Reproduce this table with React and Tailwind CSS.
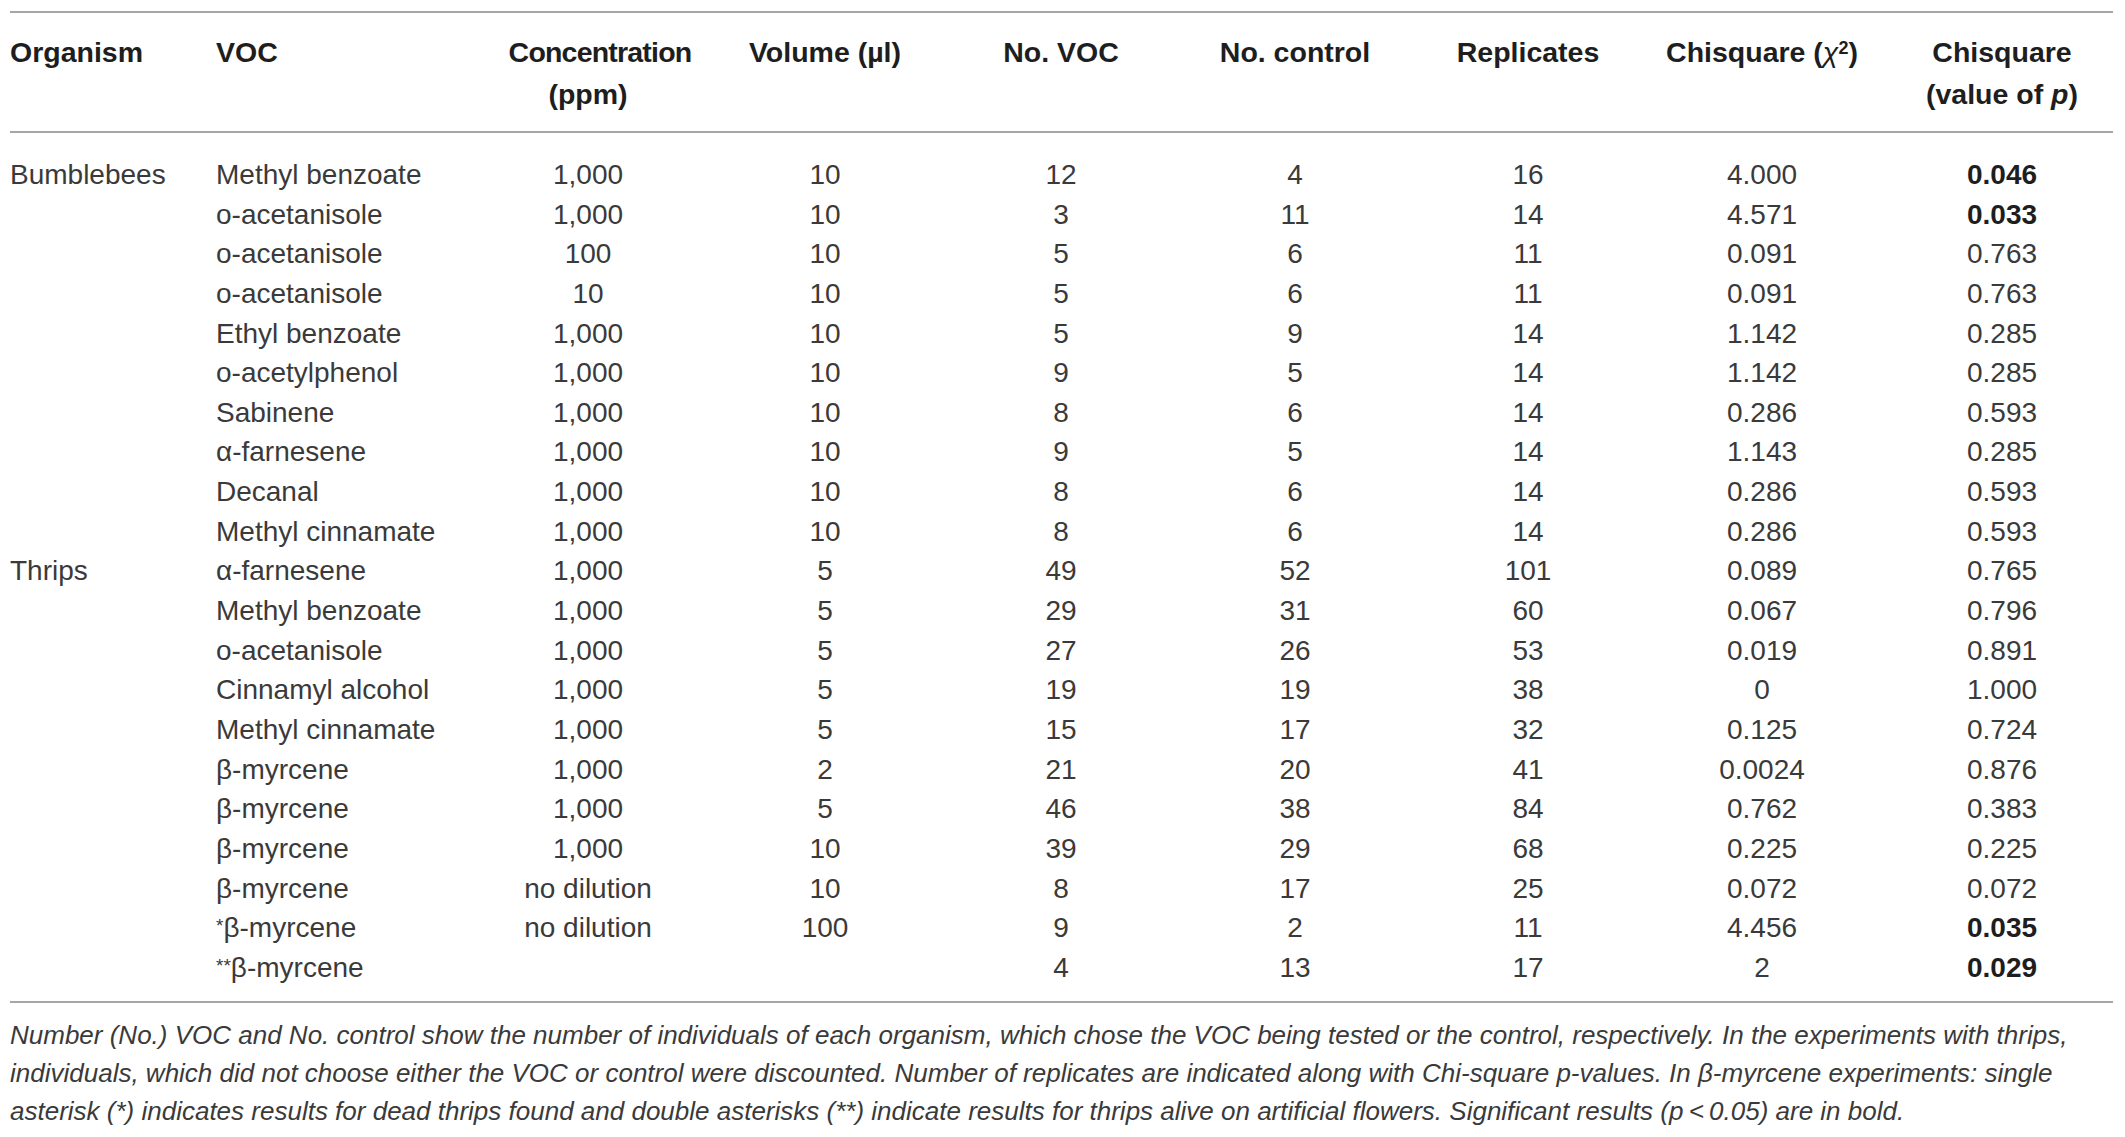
import React from "react";

const rows = [
  ["Bumblebees", "Methyl benzoate", "1,000", "10", "12", "4", "16", "4.000", "0.046", true],
  ["", "o-acetanisole", "1,000", "10", "3", "11", "14", "4.571", "0.033", true],
  ["", "o-acetanisole", "100", "10", "5", "6", "11", "0.091", "0.763"],
  ["", "o-acetanisole", "10", "10", "5", "6", "11", "0.091", "0.763"],
  ["", "Ethyl benzoate", "1,000", "10", "5", "9", "14", "1.142", "0.285"],
  ["", "o-acetylphenol", "1,000", "10", "9", "5", "14", "1.142", "0.285"],
  ["", "Sabinene", "1,000", "10", "8", "6", "14", "0.286", "0.593"],
  ["", "α-farnesene", "1,000", "10", "9", "5", "14", "1.143", "0.285"],
  ["", "Decanal", "1,000", "10", "8", "6", "14", "0.286", "0.593"],
  ["", "Methyl cinnamate", "1,000", "10", "8", "6", "14", "0.286", "0.593"],
  ["Thrips", "α-farnesene", "1,000", "5", "49", "52", "101", "0.089", "0.765"],
  ["", "Methyl benzoate", "1,000", "5", "29", "31", "60", "0.067", "0.796"],
  ["", "o-acetanisole", "1,000", "5", "27", "26", "53", "0.019", "0.891"],
  ["", "Cinnamyl alcohol", "1,000", "5", "19", "19", "38", "0", "1.000"],
  ["", "Methyl cinnamate", "1,000", "5", "15", "17", "32", "0.125", "0.724"],
  ["", "β-myrcene", "1,000", "2", "21", "20", "41", "0.0024", "0.876"],
  ["", "β-myrcene", "1,000", "5", "46", "38", "84", "0.762", "0.383"],
  ["", "β-myrcene", "1,000", "10", "39", "29", "68", "0.225", "0.225"],
  ["", "β-myrcene", "no dilution", "10", "8", "17", "25", "0.072", "0.072"],
  ["", "*β-myrcene", "no dilution", "100", "9", "2", "11", "4.456", "0.035", true],
  ["", "**β-myrcene", "", "", "4", "13", "17", "2", "0.029", true],
];

// column widths tuned so the centred columns line up with the original table
const cols = "grid grid-cols-[206px_254px_236px_238px_234px_234px_232px_236px_233px]";

function Voc({ name }) {
  const m = name.match(/^(\**)(.*)$/);
  return (
    <span>
      {m[1] && <span className="text-[19px] leading-none align-[5px]">{m[1]}</span>}
      {m[2]}
    </span>
  );
}

export default function App() {
  return (
    <div
      className="min-h-[1137px] w-[2125px] bg-white pt-[11px] text-[#3a3a3a]"
      style={{ fontFamily: '"Liberation Sans", Arial, sans-serif' }}
    >
      <div className="ml-[10px] w-[2103px]">
        {/* header */}
        <div className={`${cols} border-y-2 border-[#a6a6a6] pt-[18px] pb-[16px] text-[28.5px] font-bold leading-[42px] text-[#1e1e1e]`}>
          <div>Organism</div>
          <div>VOC</div>
          <div className="text-center">
            <span className="ml-[24px] inline-block tracking-[-0.8px]">Concentration</span>
            <br />
            (ppm)
          </div>
          <div className="text-center">Volume (µl)</div>
          <div className="text-center">No. VOC</div>
          <div className="text-center">No. control</div>
          <div className="text-center">Replicates</div>
          <div className="text-center">
            Chisquare (<i className="font-normal">χ</i>
            <span className="text-[18px] leading-none align-[8px]">2</span>)
          </div>
          <div className="pl-[11px] text-center">
            Chisquare
            <br />
            (value of <i>p</i>)
          </div>
        </div>

        {/* body */}
        <div className="border-b-2 border-[#a6a6a6] pt-[22px] pb-[14px] text-[28px]">
          {rows.map((r, i) => (
            <div key={i} className={`${cols} h-[39.65px] items-center leading-[39.65px]`}>
              <div>{r[0]}</div>
              <div>
                <Voc name={r[1]} />
              </div>
              <div className="text-center">{r[2]}</div>
              <div className="text-center">{r[3]}</div>
              <div className="text-center">{r[4]}</div>
              <div className="text-center">{r[5]}</div>
              <div className="text-center">{r[6]}</div>
              <div className="text-center">{r[7]}</div>
              <div className={`pl-[11px] text-center ${r[9] ? "font-bold text-[#1e1e1e]" : ""}`}>{r[8]}</div>
            </div>
          ))}
        </div>

        {/* footnote */}
        <p className="pt-[13px] text-[26px] italic leading-[38px]">
          Number (No.) VOC and No. control show the number of individuals of each organism, which chose the VOC being tested or the control, respectively. In the experiments with thrips,
          <br />
          individuals, which did not choose either the VOC or control were discounted. Number of replicates are indicated along with Chi-square p-values. In β-myrcene experiments: single
          <br />
          asterisk (*) indicates results for dead thrips found and double asterisks (**) indicate results for thrips alive on artificial flowers. Significant results (p{"\u2009"}&lt;{"\u2009"}0.05) are in bold.
        </p>
      </div>
    </div>
  );
}
